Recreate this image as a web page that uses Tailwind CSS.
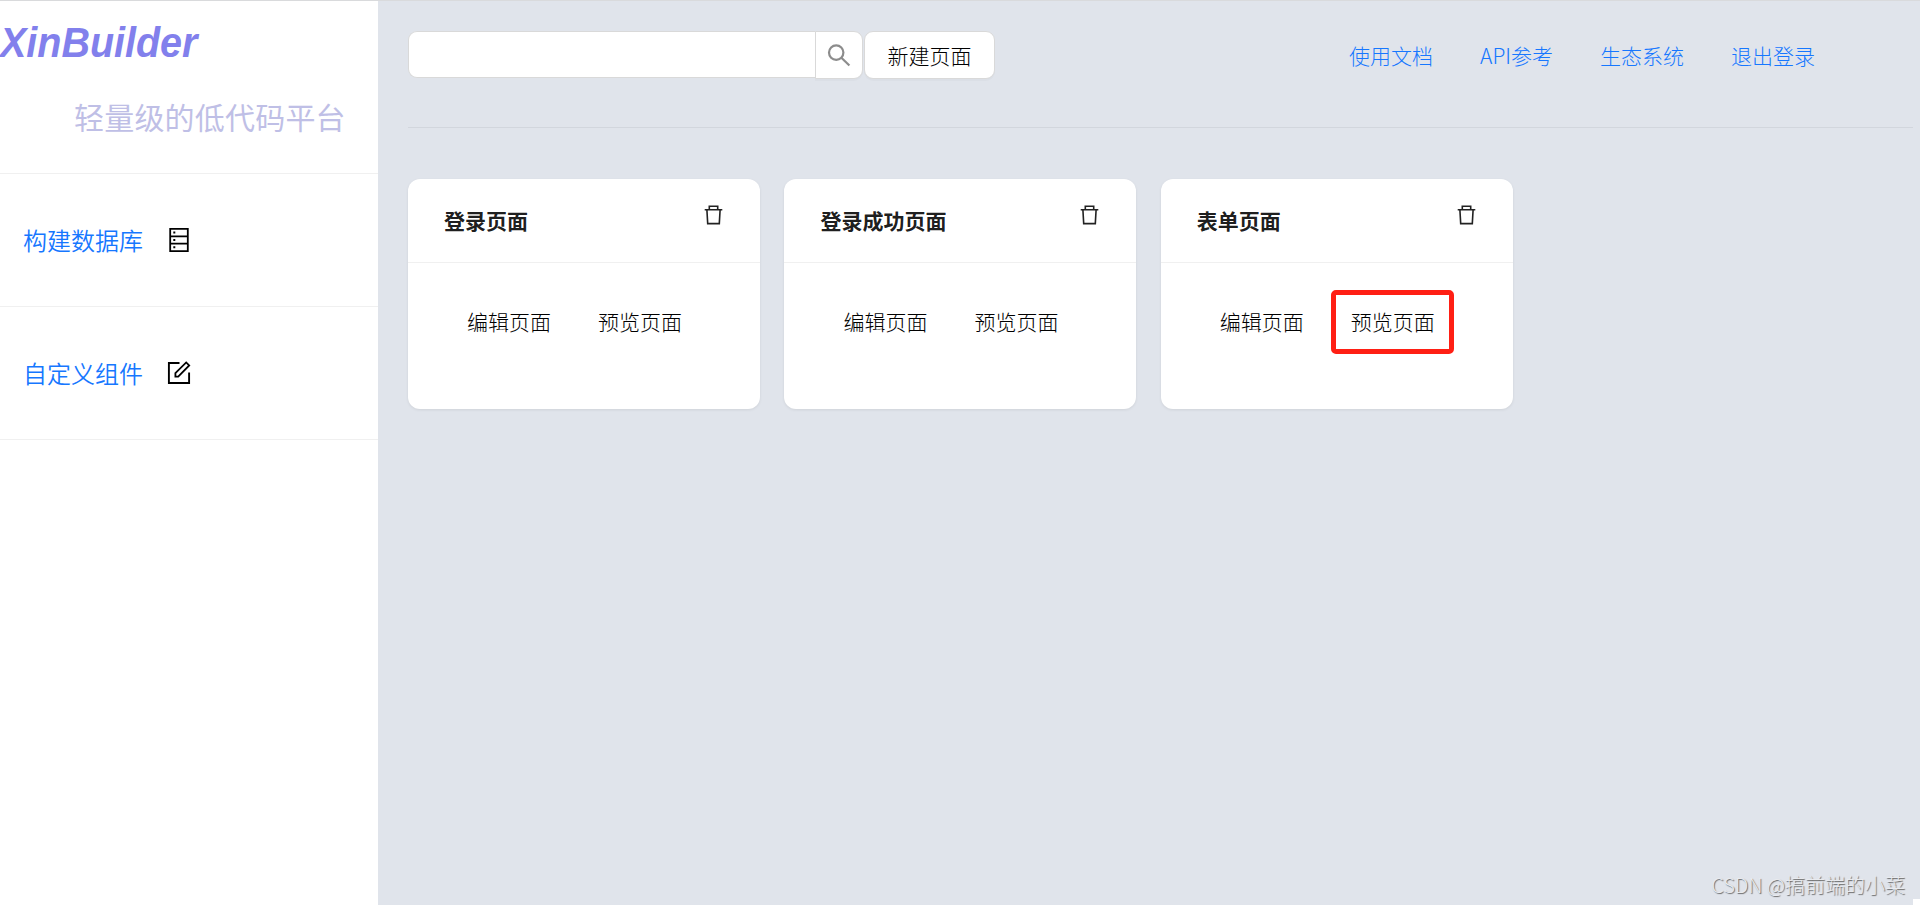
<!DOCTYPE html>
<html lang="zh-CN">
<head>
  <meta charset="UTF-8" />
  <meta name="viewport" content="width=device-width, initial-scale=1.0" />
  <title>XinBuilder</title>
  <script src="https://cdn.jsdelivr.net/npm/@tailwindcss/browser@4"></script>
</head>
<body class="relative flex h-screen overflow-hidden border-t border-[#d9dadc] bg-[#e0e4eb] font-['Noto_Sans_CJK_SC',sans-serif] text-[21px] font-light leading-8 text-black">

  <!-- Sidebar -->
  <aside class="w-[378px] shrink-0 bg-white">
    <div class="h-[173px] border-b border-[#f0f0f0] pt-[17px]">
      <h1 class="origin-left scale-x-[0.94] font-['Liberation_Sans',Arial,sans-serif] text-[42px] font-bold italic leading-[50px] text-[#8280ec]">XinBuilder</h1>
      <p class="mt-[23px] pl-[74px] text-[30px] font-normal leading-[50px] tracking-[0.2px] text-[#bfbfe6]">轻量级的低代码平台</p>
    </div>
    <a class="flex h-[133px] items-center border-b border-[#f0f0f0] pl-[23px] text-[24px] font-[350] text-[#1677ff]">
      <span>构建数据库</span>
      <svg class="ml-6 h-6 w-6" viewBox="0 0 24 24" fill="none" stroke="#000" stroke-width="1.8">
        <path d="M3.2.9h17.6v22.2H3.2zM3.2 8.3h17.6M3.2 15.6h17.6" />
        <path d="M6.3 4.6h2M6.3 11.9h2M6.3 19.2h2" stroke-width="2" />
      </svg>
    </a>
    <a class="flex h-[133px] items-center border-b border-[#f0f0f0] pl-[23px] text-[24px] font-[350] text-[#1677ff]">
      <span>自定义组件</span>
      <svg class="ml-6 h-6 w-6" viewBox="0 0 24 24" fill="none" stroke="#000" stroke-width="1.9">
        <path d="M12.5 2H1.9v20h20.2V11.5" />
        <path d="M8.4 15.6v-3.4L19.2 1.4l3 3L11.2 15.6z" stroke-width="1.8" />
      </svg>
    </a>
  </aside>

  <!-- Page list -->
  <main class="mr-[7px] flex-1 pl-[30px]">
    <header class="flex h-[127px] items-start border-b border-[#050505]/6 pt-[30px]">
      <input type="text" class="h-[47px] w-[407px] rounded-l-[9px] border border-r-0 border-[#d9d9d9] bg-white px-3" />
      <button class="flex h-12 w-12 items-center justify-center rounded-r-[9px] border border-[#d9d9d9] bg-white shadow-[0_2px_0_rgba(0,0,0,0.02)]">
        <svg class="h-6 w-6" viewBox="0 0 24 24" fill="none" stroke="#8c8c8c" stroke-width="2.2">
          <circle cx="9.2" cy="9.6" r="7.2" />
          <path d="M14.4 14.8l8 7.7" />
        </svg>
      </button>
      <button class="ml-px h-12 w-[131px] rounded-[9px] border border-[#d9d9d9] bg-white pb-px shadow-[0_2px_0_rgba(0,0,0,0.02)]">新建页面</button>
      <nav class="ml-auto mr-[98px] flex gap-[47px] pt-2 text-[#1677ff]">
        <a>使用文档</a>
        <a>API参考</a>
        <a>生态系统</a>
        <a>退出登录</a>
      </nav>
    </header>

    <div class="mt-[51px] flex gap-[24.4px]">
      <section class="h-[230px] w-[352px] rounded-xl bg-white shadow-[0_1px_3px_rgba(0,0,0,0.08)]">
        <div class="flex h-[84px] justify-between border-b border-[#f0f0f0] pl-9 pr-9 pt-[25px]">
          <h2 class="font-bold text-black/90">登录页面</h2>
          <svg class="mt-px h-5 w-5" viewBox="0 0 20 20" fill="none" stroke="#222" stroke-width="1.6">
            <path d="M.7 4.7h17.6M5.3 4.7V1.2h8.4v3.5M2.9 4.7l.8 13.9h11.6l.8-13.9" />
          </svg>
        </div>
        <div class="flex gap-[47px] pl-[59px] pt-[42px]">
          <a>编辑页面</a>
          <a>预览页面</a>
        </div>
      </section>

      <section class="h-[230px] w-[352px] rounded-xl bg-white shadow-[0_1px_3px_rgba(0,0,0,0.08)]">
        <div class="flex h-[84px] justify-between border-b border-[#f0f0f0] pl-9 pr-9 pt-[25px]">
          <h2 class="font-bold text-black/90">登录成功页面</h2>
          <svg class="mt-px h-5 w-5" viewBox="0 0 20 20" fill="none" stroke="#222" stroke-width="1.6">
            <path d="M.7 4.7h17.6M5.3 4.7V1.2h8.4v3.5M2.9 4.7l.8 13.9h11.6l.8-13.9" />
          </svg>
        </div>
        <div class="flex gap-[47px] pl-[59px] pt-[42px]">
          <a>编辑页面</a>
          <a>预览页面</a>
        </div>
      </section>

      <section class="h-[230px] w-[352px] rounded-xl bg-white shadow-[0_1px_3px_rgba(0,0,0,0.08)]">
        <div class="flex h-[84px] justify-between border-b border-[#f0f0f0] pl-9 pr-9 pt-[25px]">
          <h2 class="font-bold text-black/90">表单页面</h2>
          <svg class="mt-px h-5 w-5" viewBox="0 0 20 20" fill="none" stroke="#222" stroke-width="1.6">
            <path d="M.7 4.7h17.6M5.3 4.7V1.2h8.4v3.5M2.9 4.7l.8 13.9h11.6l.8-13.9" />
          </svg>
        </div>
        <div class="flex gap-[47px] pl-[59px] pt-[42px]">
          <a>编辑页面</a>
          <a class="relative">预览页面
            <span class="absolute -left-5 -top-[15px] h-16 w-[123px] rounded-[5px] border-5 border-[#ff1f14]"></span>
          </a>
        </div>
      </section>
    </div>
  </main>

  <!-- Watermark -->
  <p class="absolute bottom-1 right-[15px] whitespace-nowrap text-[20px] text-[#e9ebef] [text-shadow:1px_1px_1px_#666]">CSDN @搞前端的小菜</p>
  <div class="absolute bottom-0 right-0 h-1.5 w-[7px] bg-white"></div>

</body>
</html>
